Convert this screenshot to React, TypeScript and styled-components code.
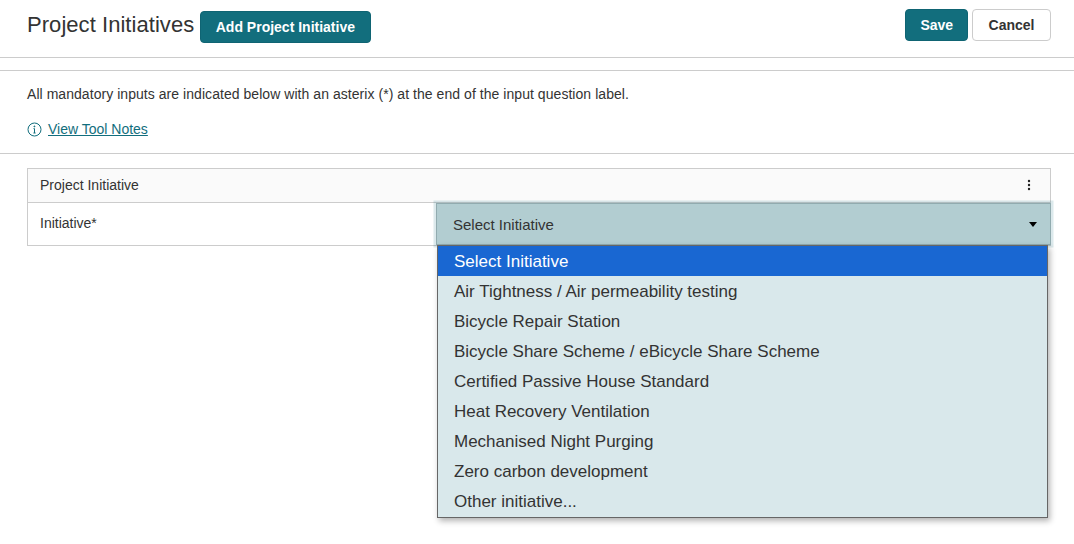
import styled, { createGlobalStyle } from 'styled-components';

const options = [
    'Select Initiative',
    'Air Tightness / Air permeability testing',
    'Bicycle Repair Station',
    'Bicycle Share Scheme / eBicycle Share Scheme',
    'Certified Passive House Standard',
    'Heat Recovery Ventilation',
    'Mechanised Night Purging',
    'Zero carbon development',
    'Other initiative...',
];

export default function App() {
    return (
        <Page>
            <GlobalStyle />
            <Header>
                <TitleGroup>
                    <Title>Project Initiatives</Title>
                    <PrimaryButton $wide>Add Project Initiative</PrimaryButton>
                </TitleGroup>
                <Actions>
                    <PrimaryButton>Save</PrimaryButton>
                    <SecondaryButton>Cancel</SecondaryButton>
                </Actions>
            </Header>
            <Intro>
                <Mandatory>All mandatory inputs are indicated below with an asterix (*) at the end of the input question label.</Mandatory>
                <NotesRow>
                    <InfoIcon />
                    <NotesLink href="#">View Tool Notes</NotesLink>
                </NotesRow>
            </Intro>
            <Content>
                <Panel>
                    <PanelHead>
                        <span>Project Initiative</span>
                        <DotsIcon />
                    </PanelHead>
                    <FieldRow>
                        <FieldLabel>Initiative*</FieldLabel>
                        <SelectWrap>
                            <SelectBox>
                                <span>Select Initiative</span>
                                <Caret />
                            </SelectBox>
                            <Menu>
                                {options.map((o, i) => (
                                    <MenuItem key={o} $selected={i === 0}>{o}</MenuItem>
                                ))}
                            </Menu>
                        </SelectWrap>
                    </FieldRow>
                </Panel>
            </Content>
        </Page>
    );
}

function InfoIcon() {
    return (
        <svg width="15" height="15" viewBox="0 0 15 15" fill="none" stroke="#126e7d" strokeWidth="1">
            <circle cx="7.5" cy="7.5" r="6.5" />
            <path d="M7.5 6.6V11M6.4 11h2.2M6.5 6.6h1" />
            <circle cx="7.4" cy="4.4" r="0.5" fill="#126e7d" />
        </svg>
    );
}

function DotsIcon() {
    return (
        <svg width="4" height="12" viewBox="0 0 4 12" fill="#222">
            <circle cx="2" cy="2" r="1.2" />
            <circle cx="2" cy="6" r="1.2" />
            <circle cx="2" cy="10" r="1.2" />
        </svg>
    );
}

const GlobalStyle = createGlobalStyle`
  html, body {
    margin: 0;
    padding: 0;
    background: #fff;
  }
  body {
    font-family: "Liberation Sans", Arial, sans-serif;
    color: #333;
  }
`;

const Page = styled.div`
  width: 1074px;
  height: 544px;
  overflow: hidden;
`;

const Header = styled.header`
  height: 58px;
  box-sizing: border-box;
  padding: 9px 23px 0 27px;
  border-bottom: 1px solid #ccc;
  display: flex;
  justify-content: space-between;
  align-items: flex-start;
`;

const TitleGroup = styled.div`
  display: flex;
  align-items: center;
  gap: 6px;
  height: 34px;
`;

const Title = styled.h1`
  margin: 0;
  font-size: 22px;
  font-weight: 400;
  letter-spacing: 0.05px;
  color: #333;
  position: relative;
  top: -1px;
`;

const Actions = styled.div`
  display: flex;
  gap: 4px;
`;

const PrimaryButton = styled.button<{ $wide?: boolean }>`
  height: 32px;
  margin-top: ${(p) => (p.$wide ? '2px' : '0')};
  padding: 0 ${(p) => (p.$wide ? '14.5px' : '14px')};
  background: #126e7d;
  border: 1px solid #0f6473;
  border-radius: 4px;
  color: #fff;
  font-family: inherit;
  font-size: 14px;
  font-weight: 700;
`;

const SecondaryButton = styled.button`
  height: 32px;
  padding: 0 15.5px;
  background: #fff;
  border: 1px solid #ccc;
  border-radius: 4px;
  color: #333;
  font-family: inherit;
  font-size: 14px;
  font-weight: 700;
`;

const Intro = styled.section`
  margin-top: 12px;
  border-top: 1px solid #ccc;
  border-bottom: 1px solid #ccc;
  height: 82px;
  padding: 0 27px;
`;

const Mandatory = styled.p`
  margin: 0;
  padding-top: 16px;
  font-size: 14px;
  line-height: 15px;
  letter-spacing: 0.05px;
  color: #333;
`;

const NotesRow = styled.div`
  display: flex;
  align-items: center;
  gap: 6px;
  margin-top: 19px;
`;

const NotesLink = styled.a`
  font-size: 14px;
  line-height: 16px;
  color: #126e7d;
  text-decoration: underline;
`;

const Content = styled.main`
  padding: 14px 23px 0 27px;
`;

const Panel = styled.div`
  border: 1px solid #ccc;
`;

const PanelHead = styled.div`
  height: 34px;
  box-sizing: border-box;
  padding: 0 19px 1px 12px;
  background: #fafafa;
  border-bottom: 1px solid #ccc;
  display: flex;
  justify-content: space-between;
  align-items: center;
  font-size: 14px;
`;

const FieldRow = styled.div`
  height: 42px;
  display: flex;
`;

const FieldLabel = styled.div`
  width: 408px;
  box-sizing: border-box;
  padding: 13px 0 0 12px;
  font-size: 14px;
  line-height: 15px;
`;

const SelectWrap = styled.div`
  position: relative;
  flex: 1;
  min-width: 0;
`;

const SelectBox = styled.div`
  height: 42px;
  box-sizing: border-box;
  margin-right: -1px;
  padding: 1px 13px 0 16px;
  background: #b2cdd1;
  border: 1px solid #91abaf;
  box-shadow: 0 0 0 2.5px rgba(18, 110, 125, 0.15);
  display: flex;
  justify-content: space-between;
  align-items: center;
  font-size: 15px;
  color: #333;
`;

const Caret = styled.span`
  width: 0;
  height: 0;
  border-left: 4.5px solid transparent;
  border-right: 4.5px solid transparent;
  border-top: 5px solid #000;
`;

const Menu = styled.ul`
  position: absolute;
  top: 42px;
  left: 1px;
  width: 611px;
  height: 273px;
  box-sizing: border-box;
  margin: 0;
  padding: 0;
  list-style: none;
  background: #d9e8eb;
  border: 1px solid #666;
  box-shadow: 2px 3px 6px rgba(0, 0, 0, 0.3);
`;

const MenuItem = styled.li<{ $selected?: boolean }>`
  height: 30px;
  box-sizing: border-box;
  padding-left: 16px;
  line-height: 32px;
  font-size: 17px;
  white-space: nowrap;
  color: ${(p) => (p.$selected ? '#fff' : '#333')};
  background: ${(p) => (p.$selected ? '#1967d2' : 'transparent')};
`;
